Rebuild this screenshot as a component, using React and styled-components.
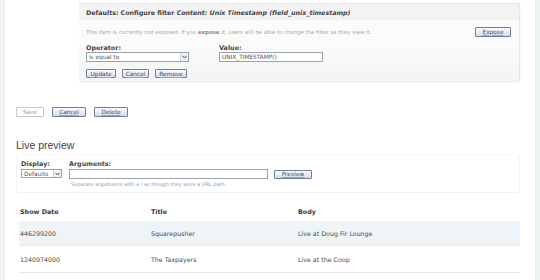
import React from "react";
import styled, { createGlobalStyle } from "styled-components";

const Global = createGlobalStyle`
  html, body { margin: 0; padding: 0; background: #fff; }
  body { font-family: "DejaVu Sans", Verdana, sans-serif; color: #333; }
  * { box-sizing: border-box; }
`;

const Page = styled.div`
  display: flex;
  width: 540px;
  height: 280px;
  overflow: hidden;
  background: #fff;
`;

const SideStrip = styled.div`
  width: ${(p) => p.$w}px;
  flex: none;
  background: #eef3f6;
  border-${(p) => (p.$right ? "left" : "right")}: 1px solid #e6ecef;
`;

const Main = styled.div`
  flex: 1;
  padding: 0 15px 0 11px;
  display: flex;
  flex-direction: column;
`;

const FilterBox = styled.div`
  margin: 3px 0 0 63px;
  border-top: 1px solid #e2e2e2;
  border-right: 1px solid #e6e6e6;
  border-bottom: 1px solid #ececec;
  border-radius: 0 0 3px 3px;
  background: linear-gradient(#fdfdfd, #fafafa 60%, #f4f4f4);
  box-shadow: 1px 1px 1px rgba(0, 0, 0, 0.03);
  height: 79px;
  display: flex;
  flex-direction: column;
`;

const BoxHeader = styled.div`
  height: 16px;
  background: #f3f3f3;
  display: flex;
  align-items: center;
  padding: 1px 7px 0;
  font-size: 6.3px;
  font-weight: bold;
  color: #444;
  em { font-style: italic; }
`;

const BoxBody = styled.div`
  padding: 0 8px 0 7px;
  display: flex;
  flex-direction: column;
`;

const DescRow = styled.div`
  display: flex;
  align-items: center;
  justify-content: space-between;
  height: 22px;
  padding-top: 1px;
`;

const Desc = styled.div`
  font-size: 5.4px;
  color: #a8a8a8;
  b { color: #8a8a8a; }
`;

const FieldRow = styled.div`
  display: flex;
  gap: 30px;
  margin-top: 1px;
`;

const Field = styled.div`
  display: flex;
  flex-direction: column;
`;

const Label = styled.div`
  font-size: 6.4px;
  font-weight: bold;
  color: #444;
  height: ${(p) => p.$h || 11}px;
  display: flex;
  align-items: center;
`;

const SelectBox = styled.div`
  width: ${(p) => p.$w}px;
  height: ${(p) => p.$h || 10}px;
  border: 1px solid #9aa3ad;
  background: #fff;
  display: flex;
  align-items: center;
  justify-content: space-between;
  font-size: 5.8px;
  color: #555;
  padding-left: 2px;
`;

const Arrow = styled.span`
  width: 8px;
  height: 100%;
  border-left: 1px solid #c5cbd2;
  background: #eef1f5;
  display: flex;
  align-items: center;
  justify-content: center;
`;

const TextInput = styled.div`
  width: ${(p) => p.$w}px;
  height: 10px;
  border: 1px solid #9aa3ad;
  background: #fff;
  font-size: 5.8px;
  color: #555;
  padding-left: 2px;
  display: flex;
  align-items: center;
`;

const ButtonRow = styled.div`
  display: flex;
  gap: ${(p) => p.$gap || 6}px;
  margin-top: ${(p) => p.$mt || 0}px;
  margin-left: ${(p) => p.$ml || 0}px;
`;

const Button = styled.div`
  height: ${(p) => p.$h || 10}px;
  width: ${(p) => p.$w}px;
  display: flex;
  align-items: center;
  justify-content: center;
  font-size: 5.8px;
  color: ${(p) => (p.$plain ? "#999" : "#3d4f7c")};
  border: 1px solid ${(p) => (p.$plain ? "#c8c8c8" : "#6f7f96")};
  background: ${(p) =>
    p.$plain ? "#fff" : "linear-gradient(#fbfcfe, #d6dbe8)"};
  border-radius: 1px;
  text-decoration: ${(p) => (p.$plain ? "none" : "underline")};
  text-decoration-color: #9aa6c0;
`;

const Heading = styled.h2`
  margin: 22px 0 0 0;
  font-family: "Liberation Sans", Arial, sans-serif;
  font-weight: normal;
  font-size: 10.5px;
  color: #444;
  line-height: 12px;
  height: 12px;
`;

const PreviewPanel = styled.div`
  margin-top: 3px;
  height: 39px;
  border: 1px solid #f4f4f4;
  border-top-color: #f7f7f7;
  border-radius: 4px;
  padding: 3px 0 0 4px;
  display: flex;
  flex-direction: column;
`;

const PreviewControls = styled.div`
  display: flex;
  gap: 7px;
  align-items: flex-start;
`;

const ArgRow = styled.div`
  display: flex;
  gap: 6px;
  align-items: center;
`;

const Help = styled.div`
  font-size: 5px;
  color: #999;
  margin-top: 2px;
  padding-left: 2px;
`;

const Table = styled.div`
  margin: 11px 0 0 3px;
  display: flex;
  flex-direction: column;
`;

const Row = styled.div`
  display: grid;
  grid-template-columns: 131px 147px 1fr;
  align-items: center;
  height: ${(p) => p.$h}px;
  background: ${(p) => p.$bg || "transparent"};
  border-bottom: 1px solid ${(p) => p.$line || "transparent"};
  padding-left: 1px;
`;

const HeadCell = styled.div`
  font-size: 6.4px;
  font-weight: bold;
  color: #3a3a3a;
`;

const Cell = styled.div`
  font-size: 6.3px;
  color: #4a4a4a;
`;

function ArrowIcon() {
  return (
    <svg width="5" height="4" viewBox="0 0 5 4">
      <path d="M0.5 0.8 L2.5 3 L4.5 0.8" fill="none" stroke="#3a4660" strokeWidth="1" />
    </svg>
  );
}

export default function App() {
  return (
    <>
      <Global />
      <Page>
        <SideStrip $w={5} />
        <Main>
          <FilterBox>
            <BoxHeader>
              Defaults: Configure filter&nbsp;<em>Content: Unix Timestamp (field_unix_timestamp)</em>
            </BoxHeader>
            <BoxBody>
              <DescRow>
                <Desc>
                  This item is currently not exposed. If you <b>expose</b> it, users will be able to change the filter as they view it.
                </Desc>
                <Button $w={36}>Expose</Button>
              </DescRow>
              <FieldRow>
                <Field>
                  <Label $h={9}>Operator:</Label>
                  <SelectBox $w={103}>
                    is equal to
                    <Arrow>
                      <ArrowIcon />
                    </Arrow>
                  </SelectBox>
                </Field>
                <Field>
                  <Label $h={9}>Value:</Label>
                  <TextInput $w={104}>UNIX_TIMESTAMP()</TextInput>
                </Field>
              </FieldRow>
              <ButtonRow $mt={7}>
                <Button $w={30} $h={9}>Update</Button>
                <Button $w={27} $h={9}>Cancel</Button>
                <Button $w={32} $h={9}>Remove</Button>
              </ButtonRow>
            </BoxBody>
          </FilterBox>

          <ButtonRow $mt={25} $gap={8}>
            <Button $w={28} $plain>Save</Button>
            <Button $w={34}>Cancel</Button>
            <Button $w={34}>Delete</Button>
          </ButtonRow>

          <Heading>Live preview</Heading>

          <PreviewPanel>
            <PreviewControls>
              <Field>
                <Label $h={11}>Display:</Label>
                <SelectBox $w={41} $h={9}>
                  Defaults
                  <Arrow>
                    <ArrowIcon />
                  </Arrow>
                </SelectBox>
              </Field>
              <Field>
                <Label $h={11}>Arguments:</Label>
                <ArgRow>
                  <TextInput $w={199} />
                  <Button $w={38} $h={9}>Preview</Button>
                </ArgRow>
                <Help>Separate arguments with a / as though they were a URL path.</Help>
              </Field>
            </PreviewControls>
          </PreviewPanel>

          <Table>
            <Row $h={17}>
              <HeadCell>Show Date</HeadCell>
              <HeadCell>Title</HeadCell>
              <HeadCell>Body</HeadCell>
            </Row>
            <Row $h={25} $bg="#eef4f7" $line="#e3ebef">
              <Cell>446299200</Cell>
              <Cell>Squarepusher</Cell>
              <Cell>Live at Doug Fir Lounge</Cell>
            </Row>
            <Row $h={27} $line="#e6e6e6">
              <Cell>1240974000</Cell>
              <Cell>The Taxpayers</Cell>
              <Cell>Live at the Coop</Cell>
            </Row>
          </Table>
        </Main>
        <SideStrip $w={5} $right />
      </Page>
    </>
  );
}
